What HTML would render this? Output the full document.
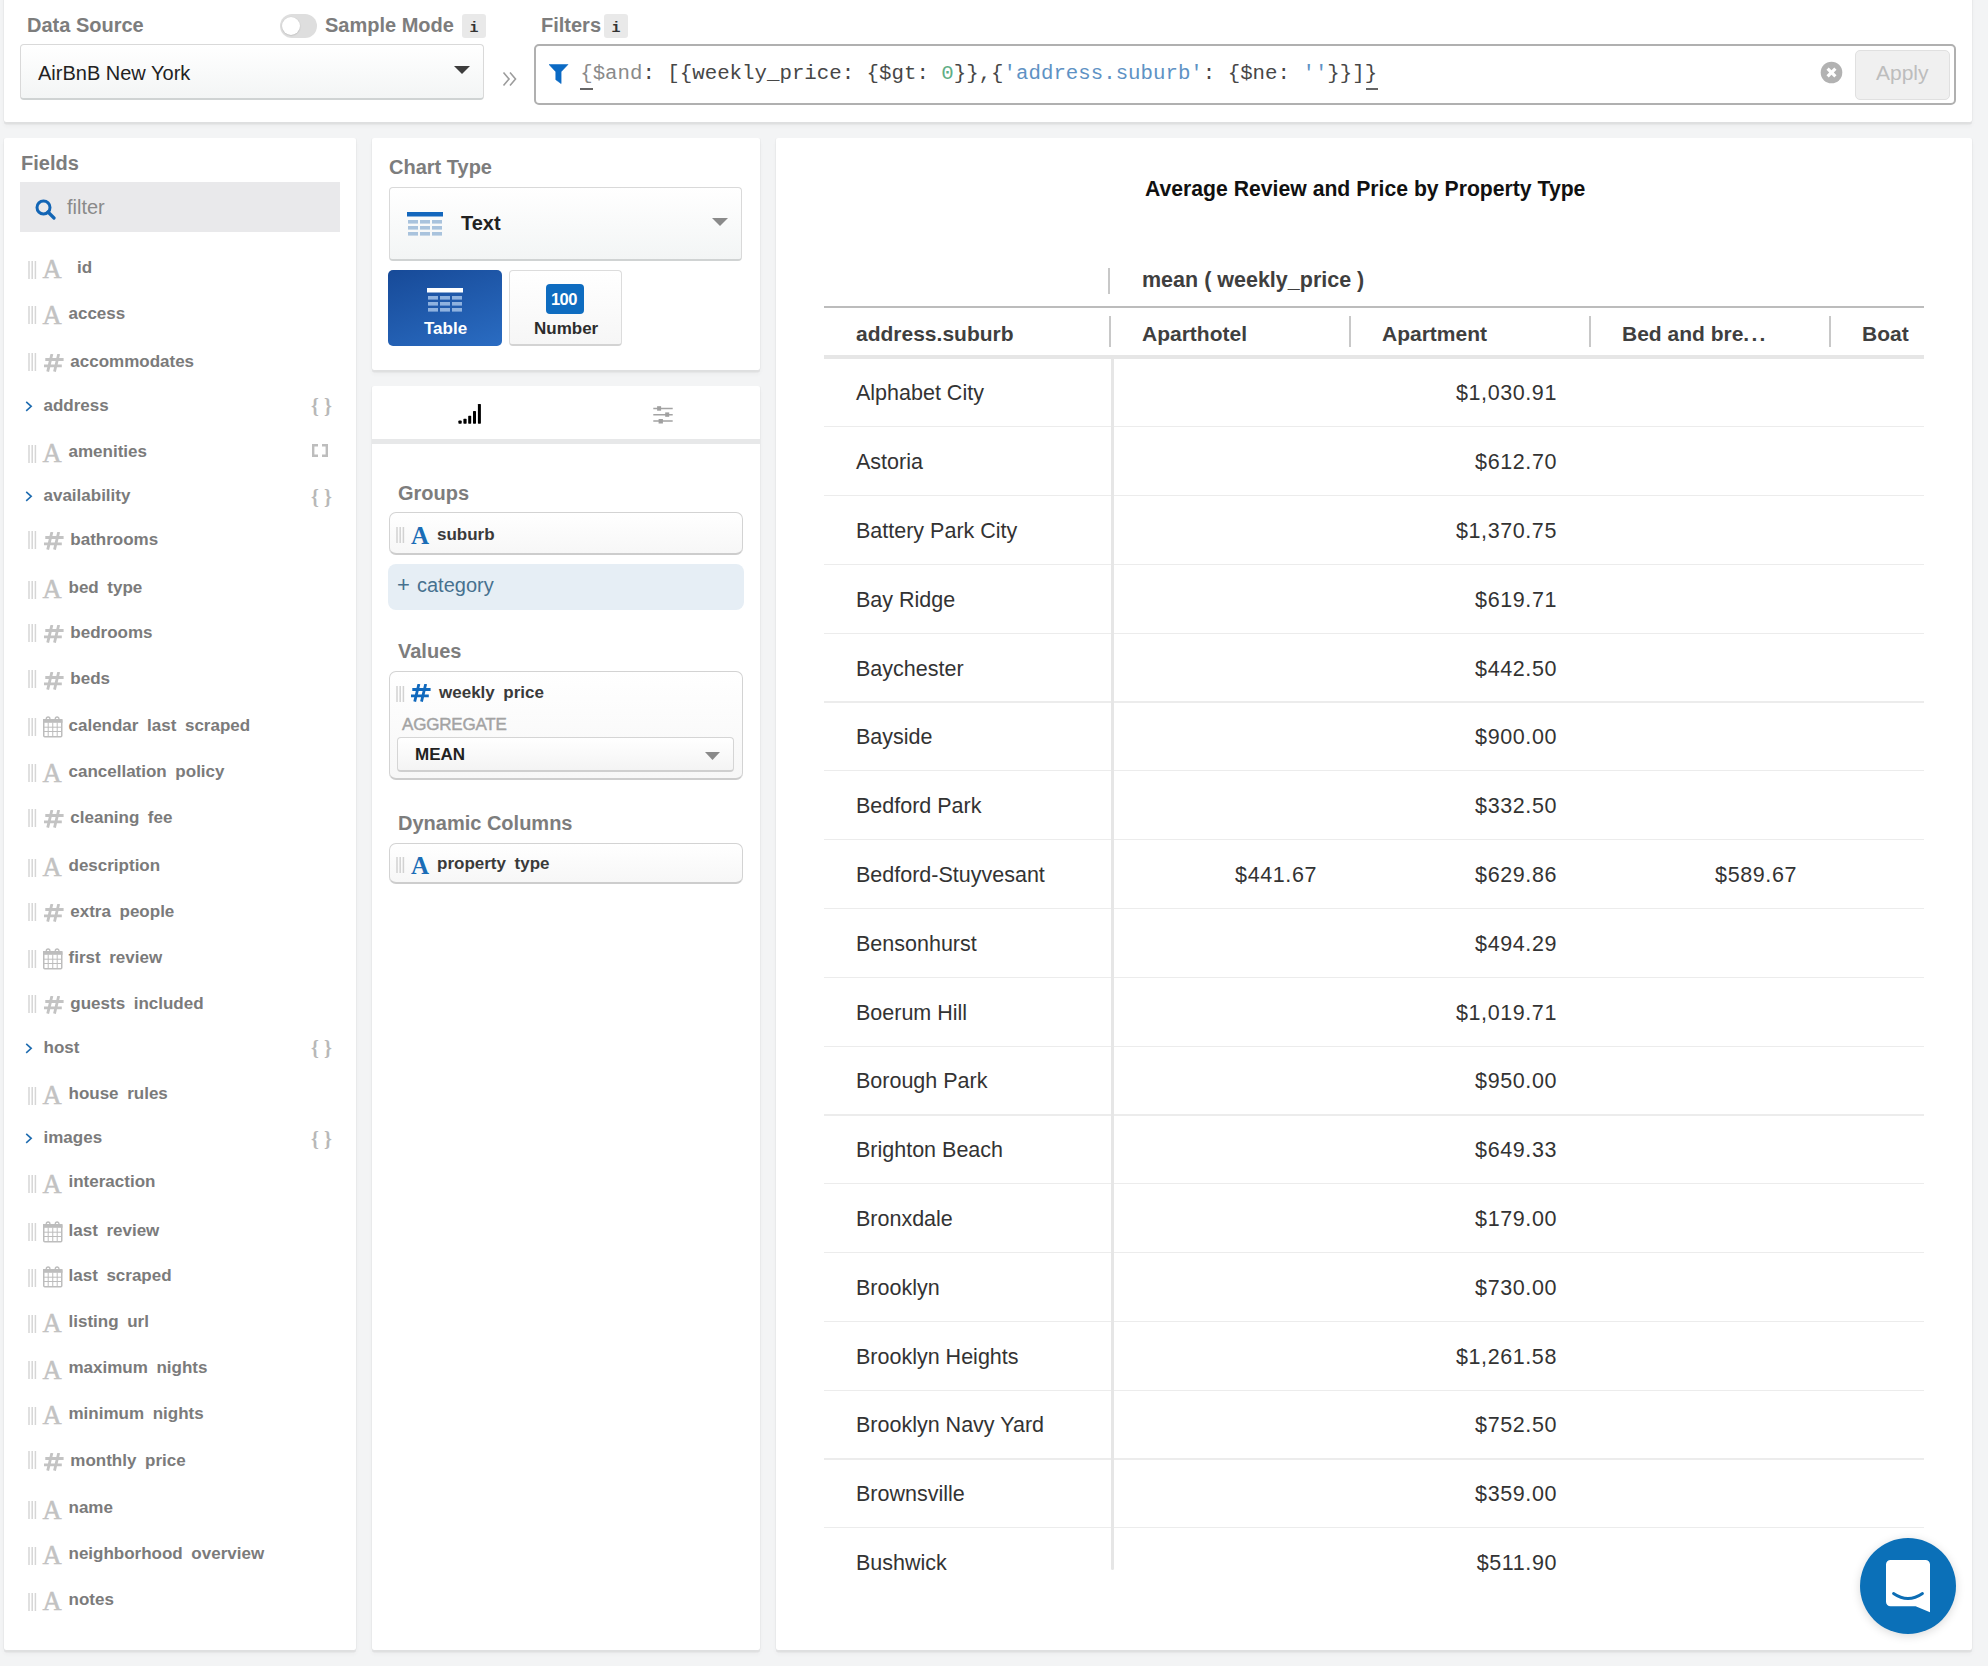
<!DOCTYPE html>
<html><head><meta charset="utf-8"><style>
html,body{margin:0;padding:0;}
body{width:1988px;height:1666px;overflow:hidden;position:relative;background:#f3f4f5;font-family:"Liberation Sans",sans-serif;}
.t{position:absolute;line-height:1;white-space:pre;}
</style></head><body>
<div style="position:absolute;left:4px;top:-6px;width:1968px;height:128px;background:#fff;border-radius:2px;box-shadow:0 2.5px 0 rgba(0,0,0,0.055),0 4px 5px rgba(0,0,0,0.035),1px 0 1px rgba(0,0,0,0.03),-1px 0 1px rgba(0,0,0,0.03);"></div>
<div style="position:absolute;left:4px;top:138px;width:352px;height:1512px;background:#fff;border-radius:2px;box-shadow:0 2.5px 0 rgba(0,0,0,0.055),0 4px 5px rgba(0,0,0,0.035),1px 0 1px rgba(0,0,0,0.03),-1px 0 1px rgba(0,0,0,0.03);"></div>
<div style="position:absolute;left:372px;top:138px;width:388px;height:232px;background:#fff;border-radius:2px;box-shadow:0 2.5px 0 rgba(0,0,0,0.055),0 4px 5px rgba(0,0,0,0.035),1px 0 1px rgba(0,0,0,0.03),-1px 0 1px rgba(0,0,0,0.03);"></div>
<div style="position:absolute;left:372px;top:386px;width:388px;height:1264px;background:#fff;border-radius:2px;box-shadow:0 2.5px 0 rgba(0,0,0,0.055),0 4px 5px rgba(0,0,0,0.035),1px 0 1px rgba(0,0,0,0.03),-1px 0 1px rgba(0,0,0,0.03);"></div>
<div style="position:absolute;left:776px;top:138px;width:1196px;height:1512px;background:#fff;border-radius:2px;box-shadow:0 2.5px 0 rgba(0,0,0,0.055),0 4px 5px rgba(0,0,0,0.035),1px 0 1px rgba(0,0,0,0.03),-1px 0 1px rgba(0,0,0,0.03);"></div>
<div class="t" style="left:27px;top:15.00px;font-size:20px;color:#7d7d7d;font-weight:bold;font-family:'Liberation Sans';">Data Source</div>
<div style="position:absolute;left:280px;top:14px;width:37px;height:24px;background:#dedede;border-radius:12px;"></div>
<div style="position:absolute;left:281.5px;top:17px;width:18.0px;height:18px;background:#fff;border-radius:50%;box-shadow:0 0.5px 1.5px rgba(0,0,0,0.2);"></div>
<div class="t" style="left:325px;top:15.00px;font-size:20px;color:#7d7d7d;font-weight:bold;font-family:'Liberation Sans';">Sample Mode</div>
<div style="position:absolute;left:462px;top:14px;width:24px;height:24px;background:#e9e9e9;border-radius:3px;"></div>
<div class="t" style="left:469.5px;top:20.60px;font-size:15px;color:#333;font-weight:bold;font-family:'Liberation Mono';">i</div>
<div style="position:absolute;left:20px;top:44px;width:464px;height:56px;box-sizing:border-box;border:1px solid #d9d9d9;border-bottom:2px solid #cfd3d3;border-radius:4px;background:linear-gradient(#fff,#f3f5f5);"></div>
<div class="t" style="left:38px;top:63.00px;font-size:20px;color:#222;font-weight:normal;font-family:'Liberation Sans';">AirBnB New York</div>
<svg style="position:absolute;left:454px;top:66px" width="16" height="8"><path d="M0 0H16L8 8Z" fill="#3d3d3d"/></svg>
<svg style="position:absolute;left:502px;top:71px" width="16" height="16"><path d="M1.5 1.5L7 8L1.5 14.5M8 1.5L13.5 8L8 14.5" fill="none" stroke="#9c9c9c" stroke-width="1.6"/></svg>
<div class="t" style="left:541px;top:15.00px;font-size:20px;color:#7d7d7d;font-weight:bold;font-family:'Liberation Sans';">Filters</div>
<div style="position:absolute;left:604px;top:14px;width:24px;height:24px;background:#e9e9e9;border-radius:3px;"></div>
<div class="t" style="left:611.5px;top:20.60px;font-size:15px;color:#333;font-weight:bold;font-family:'Liberation Mono';">i</div>
<div style="position:absolute;left:534px;top:44px;width:1422px;height:61px;box-sizing:border-box;border:2px solid #b0b0b0;border-radius:5px;background:#fff;"></div>
<svg style="position:absolute;left:549px;top:64px" width="20" height="21" viewBox="0 0 20 21"><path d="M0 0.4H19L12.1 7.8V19.6L6.8 15.7V7.8Z" fill="#0b6ac4" stroke="#0b6ac4" stroke-width="0.6" stroke-linejoin="round"/></svg>
<div class="t" style="left:580.2px;top:63.53px;font-size:20.75px;color:#333;font-weight:normal;font-family:'Liberation Mono';-webkit-text-stroke:0px;"><span style='color:#8a8a8a'>{$and</span><span style='color:#474747'>: [{weekly_price: {$gt: </span><span style='color:#5fae86'>0</span><span style='color:#474747'>}},{</span><span style='color:#5e92c4'>'address.suburb'</span><span style='color:#474747'>: {$ne: </span><span style='color:#5e92c4'>''</span><span style='color:#474747'>}}]}</span></div>
<div style="position:absolute;left:580.2px;top:88px;width:12.399999999999977px;height:2px;background:#666;"></div>
<div style="position:absolute;left:1365.6px;top:88px;width:12.400000000000091px;height:2px;background:#666;"></div>
<svg style="position:absolute;left:1820.3px;top:61.3px" width="23" height="23" viewBox="0 0 23 23"><circle cx="11.5" cy="11.5" r="10.8" fill="#b2b2b2"/><path d="M7.6 7.6L15.4 15.4M15.4 7.6L7.6 15.4" stroke="#fff" stroke-width="3.2"/></svg>
<div style="position:absolute;left:1854.5px;top:50.3px;width:95.09999999999991px;height:49.400000000000006px;box-sizing:border-box;border:1px solid #e0e0e0;border-radius:5px;background:#f0f0f0;"></div>
<div class="t" style="left:1876px;top:62.35px;font-size:21px;color:#bdbdbd;font-weight:normal;font-family:'Liberation Sans';">Apply</div>
<div class="t" style="left:21px;top:153.00px;font-size:20px;color:#7d7d7d;font-weight:bold;font-family:'Liberation Sans';">Fields</div>
<div style="position:absolute;left:20px;top:182px;width:320px;height:50px;background:#e9e9eb;"></div>
<svg style="position:absolute;left:35px;top:199px" width="21" height="21" viewBox="0 0 21 21"><circle cx="8.5" cy="8.5" r="6.5" fill="none" stroke="#1265b5" stroke-width="3"/><path d="M13 13L19 19" stroke="#1265b5" stroke-width="3.2" stroke-linecap="round"/></svg>
<div class="t" style="left:67px;top:197.00px;font-size:20px;color:#8a8a8a;font-weight:normal;font-family:'Liberation Sans';">filter</div>
<svg style="position:absolute;left:28px;top:260.8px" width="9" height="18"><path d="M1 0V18M4.2 0V18M7.4 0V18" stroke="#d6d6d6" stroke-width="1.5"/></svg>
<div class="t" style="left:42.5px;top:256.21px;font-size:26.5px;color:#c2c2c2;font-weight:normal;font-family:'Liberation Serif';-webkit-text-stroke:0.5px #c2c2c2;">A</div>
<div class="t" style="left:68.5px;top:259.15px;font-size:17px;color:#7b7b7b;font-weight:bold;font-family:'Liberation Sans';"><span style="display:inline-block;width:8.6px"></span>id</div>
<svg style="position:absolute;left:28px;top:306.3px" width="9" height="18"><path d="M1 0V18M4.2 0V18M7.4 0V18" stroke="#d6d6d6" stroke-width="1.5"/></svg>
<div class="t" style="left:42.5px;top:301.71px;font-size:26.5px;color:#c2c2c2;font-weight:normal;font-family:'Liberation Serif';-webkit-text-stroke:0.5px #c2c2c2;">A</div>
<div class="t" style="left:68.5px;top:304.65px;font-size:17px;color:#7b7b7b;font-weight:bold;font-family:'Liberation Sans';">access</div>
<svg style="position:absolute;left:28px;top:352.5px" width="9" height="18"><path d="M1 0V18M4.2 0V18M7.4 0V18" stroke="#d6d6d6" stroke-width="1.5"/></svg>
<svg style="position:absolute;left:43.5px;top:353.8px" width="20" height="18" viewBox="0 0 20 18"><path d="M1.3 5.5H19.6M0 11.8H17.8M7.9 0L3.7 17.6M14.7 0L10.5 17.6" stroke="#c3c3c3" stroke-width="2.8"/></svg>
<div class="t" style="left:70.3px;top:352.75px;font-size:17px;color:#7b7b7b;font-weight:bold;font-family:'Liberation Sans';">accommodates</div>
<svg style="position:absolute;left:25px;top:400.9px" width="8" height="11"><path d="M1.2 0.8L6.2 5.3L1.2 9.8" fill="none" stroke="#1f6cb0" stroke-width="1.6"/></svg>
<div class="t" style="left:43.5px;top:397.05px;font-size:17px;color:#7b7b7b;font-weight:bold;font-family:'Liberation Sans';">address</div>
<div class="t" style="left:311px;top:396.40px;font-size:20px;color:#b8b8b8;font-weight:bold;font-family:'Liberation Serif';">{ }</div>
<svg style="position:absolute;left:28px;top:444.5px" width="9" height="18"><path d="M1 0V18M4.2 0V18M7.4 0V18" stroke="#d6d6d6" stroke-width="1.5"/></svg>
<div class="t" style="left:42.5px;top:439.91px;font-size:26.5px;color:#c2c2c2;font-weight:normal;font-family:'Liberation Serif';-webkit-text-stroke:0.5px #c2c2c2;">A</div>
<div class="t" style="left:68.5px;top:442.85px;font-size:17px;color:#7b7b7b;font-weight:bold;font-family:'Liberation Sans';">amenities</div>
<svg style="position:absolute;left:312px;top:444.0px" width="16" height="13"><path d="M6 1.2H1.2V11.8H6M10 1.2H14.8V11.8H10" fill="none" stroke="#bdbdbd" stroke-width="2.4"/></svg>
<svg style="position:absolute;left:25px;top:491.0px" width="8" height="11"><path d="M1.2 0.8L6.2 5.3L1.2 9.8" fill="none" stroke="#1f6cb0" stroke-width="1.6"/></svg>
<div class="t" style="left:43.5px;top:487.15px;font-size:17px;color:#7b7b7b;font-weight:bold;font-family:'Liberation Sans';">availability</div>
<div class="t" style="left:311px;top:486.50px;font-size:20px;color:#b8b8b8;font-weight:bold;font-family:'Liberation Serif';">{ }</div>
<svg style="position:absolute;left:28px;top:530.6px" width="9" height="18"><path d="M1 0V18M4.2 0V18M7.4 0V18" stroke="#d6d6d6" stroke-width="1.5"/></svg>
<svg style="position:absolute;left:43.5px;top:531.9px" width="20" height="18" viewBox="0 0 20 18"><path d="M1.3 5.5H19.6M0 11.8H17.8M7.9 0L3.7 17.6M14.7 0L10.5 17.6" stroke="#c3c3c3" stroke-width="2.8"/></svg>
<div class="t" style="left:70.3px;top:530.85px;font-size:17px;color:#7b7b7b;font-weight:bold;font-family:'Liberation Sans';">bathrooms</div>
<svg style="position:absolute;left:28px;top:580.5px" width="9" height="18"><path d="M1 0V18M4.2 0V18M7.4 0V18" stroke="#d6d6d6" stroke-width="1.5"/></svg>
<div class="t" style="left:42.5px;top:575.90px;font-size:26.5px;color:#c2c2c2;font-weight:normal;font-family:'Liberation Serif';-webkit-text-stroke:0.5px #c2c2c2;">A</div>
<div class="t" style="left:68.5px;top:578.85px;font-size:17px;color:#7b7b7b;font-weight:bold;font-family:'Liberation Sans';">bed<span style="display:inline-block;width:8.6px"></span>type</div>
<svg style="position:absolute;left:28px;top:624.0px" width="9" height="18"><path d="M1 0V18M4.2 0V18M7.4 0V18" stroke="#d6d6d6" stroke-width="1.5"/></svg>
<svg style="position:absolute;left:43.5px;top:625.3px" width="20" height="18" viewBox="0 0 20 18"><path d="M1.3 5.5H19.6M0 11.8H17.8M7.9 0L3.7 17.6M14.7 0L10.5 17.6" stroke="#c3c3c3" stroke-width="2.8"/></svg>
<div class="t" style="left:70.3px;top:624.25px;font-size:17px;color:#7b7b7b;font-weight:bold;font-family:'Liberation Sans';">bedrooms</div>
<svg style="position:absolute;left:28px;top:670.2px" width="9" height="18"><path d="M1 0V18M4.2 0V18M7.4 0V18" stroke="#d6d6d6" stroke-width="1.5"/></svg>
<svg style="position:absolute;left:43.5px;top:671.5px" width="20" height="18" viewBox="0 0 20 18"><path d="M1.3 5.5H19.6M0 11.8H17.8M7.9 0L3.7 17.6M14.7 0L10.5 17.6" stroke="#c3c3c3" stroke-width="2.8"/></svg>
<div class="t" style="left:70.3px;top:670.45px;font-size:17px;color:#7b7b7b;font-weight:bold;font-family:'Liberation Sans';">beds</div>
<svg style="position:absolute;left:28px;top:718.2px" width="9" height="18"><path d="M1 0V18M4.2 0V18M7.4 0V18" stroke="#d6d6d6" stroke-width="1.5"/></svg>
<svg style="position:absolute;left:43px;top:715.7px" width="20" height="22" viewBox="0 0 20 22"><rect x="0.75" y="3.75" width="18" height="17" rx="1" fill="none" stroke="#bdbdbd" stroke-width="1.5"/><rect x="0" y="3" width="19.5" height="3.8" fill="#bdbdbd"/><path d="M0.75 11.2H18.75M0.75 15.5H18.75M5.2 6.5V20.75M9.75 6.5V20.75M14.2 6.5V20.75" stroke="#bdbdbd" stroke-width="1"/><path d="M3.3 4.5V2.8A1.8 1.8 0 0 1 6.9 2.8V4.5M12.3 4.5V2.8A1.8 1.8 0 0 1 15.9 2.8V4.5" fill="none" stroke="#bdbdbd" stroke-width="1.4"/></svg>
<div class="t" style="left:68.5px;top:716.75px;font-size:17px;color:#7b7b7b;font-weight:bold;font-family:'Liberation Sans';">calendar<span style="display:inline-block;width:8.6px"></span>last<span style="display:inline-block;width:8.6px"></span>scraped</div>
<svg style="position:absolute;left:28px;top:764.3px" width="9" height="18"><path d="M1 0V18M4.2 0V18M7.4 0V18" stroke="#d6d6d6" stroke-width="1.5"/></svg>
<div class="t" style="left:42.5px;top:759.71px;font-size:26.5px;color:#c2c2c2;font-weight:normal;font-family:'Liberation Serif';-webkit-text-stroke:0.5px #c2c2c2;">A</div>
<div class="t" style="left:68.5px;top:762.65px;font-size:17px;color:#7b7b7b;font-weight:bold;font-family:'Liberation Sans';">cancellation<span style="display:inline-block;width:8.6px"></span>policy</div>
<svg style="position:absolute;left:28px;top:809.0px" width="9" height="18"><path d="M1 0V18M4.2 0V18M7.4 0V18" stroke="#d6d6d6" stroke-width="1.5"/></svg>
<svg style="position:absolute;left:43.5px;top:810.3px" width="20" height="18" viewBox="0 0 20 18"><path d="M1.3 5.5H19.6M0 11.8H17.8M7.9 0L3.7 17.6M14.7 0L10.5 17.6" stroke="#c3c3c3" stroke-width="2.8"/></svg>
<div class="t" style="left:70.3px;top:809.25px;font-size:17px;color:#7b7b7b;font-weight:bold;font-family:'Liberation Sans';">cleaning<span style="display:inline-block;width:8.6px"></span>fee</div>
<svg style="position:absolute;left:28px;top:858.5px" width="9" height="18"><path d="M1 0V18M4.2 0V18M7.4 0V18" stroke="#d6d6d6" stroke-width="1.5"/></svg>
<div class="t" style="left:42.5px;top:853.90px;font-size:26.5px;color:#c2c2c2;font-weight:normal;font-family:'Liberation Serif';-webkit-text-stroke:0.5px #c2c2c2;">A</div>
<div class="t" style="left:68.5px;top:856.85px;font-size:17px;color:#7b7b7b;font-weight:bold;font-family:'Liberation Sans';">description</div>
<svg style="position:absolute;left:28px;top:902.7px" width="9" height="18"><path d="M1 0V18M4.2 0V18M7.4 0V18" stroke="#d6d6d6" stroke-width="1.5"/></svg>
<svg style="position:absolute;left:43.5px;top:904.0px" width="20" height="18" viewBox="0 0 20 18"><path d="M1.3 5.5H19.6M0 11.8H17.8M7.9 0L3.7 17.6M14.7 0L10.5 17.6" stroke="#c3c3c3" stroke-width="2.8"/></svg>
<div class="t" style="left:70.3px;top:902.95px;font-size:17px;color:#7b7b7b;font-weight:bold;font-family:'Liberation Sans';">extra<span style="display:inline-block;width:8.6px"></span>people</div>
<svg style="position:absolute;left:28px;top:950.3px" width="9" height="18"><path d="M1 0V18M4.2 0V18M7.4 0V18" stroke="#d6d6d6" stroke-width="1.5"/></svg>
<svg style="position:absolute;left:43px;top:947.8px" width="20" height="22" viewBox="0 0 20 22"><rect x="0.75" y="3.75" width="18" height="17" rx="1" fill="none" stroke="#bdbdbd" stroke-width="1.5"/><rect x="0" y="3" width="19.5" height="3.8" fill="#bdbdbd"/><path d="M0.75 11.2H18.75M0.75 15.5H18.75M5.2 6.5V20.75M9.75 6.5V20.75M14.2 6.5V20.75" stroke="#bdbdbd" stroke-width="1"/><path d="M3.3 4.5V2.8A1.8 1.8 0 0 1 6.9 2.8V4.5M12.3 4.5V2.8A1.8 1.8 0 0 1 15.9 2.8V4.5" fill="none" stroke="#bdbdbd" stroke-width="1.4"/></svg>
<div class="t" style="left:68.5px;top:948.85px;font-size:17px;color:#7b7b7b;font-weight:bold;font-family:'Liberation Sans';">first<span style="display:inline-block;width:8.6px"></span>review</div>
<svg style="position:absolute;left:28px;top:994.9px" width="9" height="18"><path d="M1 0V18M4.2 0V18M7.4 0V18" stroke="#d6d6d6" stroke-width="1.5"/></svg>
<svg style="position:absolute;left:43.5px;top:996.2px" width="20" height="18" viewBox="0 0 20 18"><path d="M1.3 5.5H19.6M0 11.8H17.8M7.9 0L3.7 17.6M14.7 0L10.5 17.6" stroke="#c3c3c3" stroke-width="2.8"/></svg>
<div class="t" style="left:70.3px;top:995.15px;font-size:17px;color:#7b7b7b;font-weight:bold;font-family:'Liberation Sans';">guests<span style="display:inline-block;width:8.6px"></span>included</div>
<svg style="position:absolute;left:25px;top:1042.8px" width="8" height="11"><path d="M1.2 0.8L6.2 5.3L1.2 9.8" fill="none" stroke="#1f6cb0" stroke-width="1.6"/></svg>
<div class="t" style="left:43.5px;top:1038.95px;font-size:17px;color:#7b7b7b;font-weight:bold;font-family:'Liberation Sans';">host</div>
<div class="t" style="left:311px;top:1038.30px;font-size:20px;color:#b8b8b8;font-weight:bold;font-family:'Liberation Serif';">{ }</div>
<svg style="position:absolute;left:28px;top:1086.8px" width="9" height="18"><path d="M1 0V18M4.2 0V18M7.4 0V18" stroke="#d6d6d6" stroke-width="1.5"/></svg>
<div class="t" style="left:42.5px;top:1082.20px;font-size:26.5px;color:#c2c2c2;font-weight:normal;font-family:'Liberation Serif';-webkit-text-stroke:0.5px #c2c2c2;">A</div>
<div class="t" style="left:68.5px;top:1085.15px;font-size:17px;color:#7b7b7b;font-weight:bold;font-family:'Liberation Sans';">house<span style="display:inline-block;width:8.6px"></span>rules</div>
<svg style="position:absolute;left:25px;top:1133.1px" width="8" height="11"><path d="M1.2 0.8L6.2 5.3L1.2 9.8" fill="none" stroke="#1f6cb0" stroke-width="1.6"/></svg>
<div class="t" style="left:43.5px;top:1129.25px;font-size:17px;color:#7b7b7b;font-weight:bold;font-family:'Liberation Sans';">images</div>
<div class="t" style="left:311px;top:1128.60px;font-size:20px;color:#b8b8b8;font-weight:bold;font-family:'Liberation Serif';">{ }</div>
<svg style="position:absolute;left:28px;top:1175.1px" width="9" height="18"><path d="M1 0V18M4.2 0V18M7.4 0V18" stroke="#d6d6d6" stroke-width="1.5"/></svg>
<div class="t" style="left:42.5px;top:1170.51px;font-size:26.5px;color:#c2c2c2;font-weight:normal;font-family:'Liberation Serif';-webkit-text-stroke:0.5px #c2c2c2;">A</div>
<div class="t" style="left:68.5px;top:1173.45px;font-size:17px;color:#7b7b7b;font-weight:bold;font-family:'Liberation Sans';">interaction</div>
<svg style="position:absolute;left:28px;top:1223.0px" width="9" height="18"><path d="M1 0V18M4.2 0V18M7.4 0V18" stroke="#d6d6d6" stroke-width="1.5"/></svg>
<svg style="position:absolute;left:43px;top:1220.5px" width="20" height="22" viewBox="0 0 20 22"><rect x="0.75" y="3.75" width="18" height="17" rx="1" fill="none" stroke="#bdbdbd" stroke-width="1.5"/><rect x="0" y="3" width="19.5" height="3.8" fill="#bdbdbd"/><path d="M0.75 11.2H18.75M0.75 15.5H18.75M5.2 6.5V20.75M9.75 6.5V20.75M14.2 6.5V20.75" stroke="#bdbdbd" stroke-width="1"/><path d="M3.3 4.5V2.8A1.8 1.8 0 0 1 6.9 2.8V4.5M12.3 4.5V2.8A1.8 1.8 0 0 1 15.9 2.8V4.5" fill="none" stroke="#bdbdbd" stroke-width="1.4"/></svg>
<div class="t" style="left:68.5px;top:1221.55px;font-size:17px;color:#7b7b7b;font-weight:bold;font-family:'Liberation Sans';">last<span style="display:inline-block;width:8.6px"></span>review</div>
<svg style="position:absolute;left:28px;top:1268.9px" width="9" height="18"><path d="M1 0V18M4.2 0V18M7.4 0V18" stroke="#d6d6d6" stroke-width="1.5"/></svg>
<svg style="position:absolute;left:43px;top:1266.4px" width="20" height="22" viewBox="0 0 20 22"><rect x="0.75" y="3.75" width="18" height="17" rx="1" fill="none" stroke="#bdbdbd" stroke-width="1.5"/><rect x="0" y="3" width="19.5" height="3.8" fill="#bdbdbd"/><path d="M0.75 11.2H18.75M0.75 15.5H18.75M5.2 6.5V20.75M9.75 6.5V20.75M14.2 6.5V20.75" stroke="#bdbdbd" stroke-width="1"/><path d="M3.3 4.5V2.8A1.8 1.8 0 0 1 6.9 2.8V4.5M12.3 4.5V2.8A1.8 1.8 0 0 1 15.9 2.8V4.5" fill="none" stroke="#bdbdbd" stroke-width="1.4"/></svg>
<div class="t" style="left:68.5px;top:1267.45px;font-size:17px;color:#7b7b7b;font-weight:bold;font-family:'Liberation Sans';">last<span style="display:inline-block;width:8.6px"></span>scraped</div>
<svg style="position:absolute;left:28px;top:1314.9px" width="9" height="18"><path d="M1 0V18M4.2 0V18M7.4 0V18" stroke="#d6d6d6" stroke-width="1.5"/></svg>
<div class="t" style="left:42.5px;top:1310.31px;font-size:26.5px;color:#c2c2c2;font-weight:normal;font-family:'Liberation Serif';-webkit-text-stroke:0.5px #c2c2c2;">A</div>
<div class="t" style="left:68.5px;top:1313.25px;font-size:17px;color:#7b7b7b;font-weight:bold;font-family:'Liberation Sans';">listing<span style="display:inline-block;width:8.6px"></span>url</div>
<svg style="position:absolute;left:28px;top:1361.1px" width="9" height="18"><path d="M1 0V18M4.2 0V18M7.4 0V18" stroke="#d6d6d6" stroke-width="1.5"/></svg>
<div class="t" style="left:42.5px;top:1356.51px;font-size:26.5px;color:#c2c2c2;font-weight:normal;font-family:'Liberation Serif';-webkit-text-stroke:0.5px #c2c2c2;">A</div>
<div class="t" style="left:68.5px;top:1359.45px;font-size:17px;color:#7b7b7b;font-weight:bold;font-family:'Liberation Sans';">maximum<span style="display:inline-block;width:8.6px"></span>nights</div>
<svg style="position:absolute;left:28px;top:1407.0px" width="9" height="18"><path d="M1 0V18M4.2 0V18M7.4 0V18" stroke="#d6d6d6" stroke-width="1.5"/></svg>
<div class="t" style="left:42.5px;top:1402.40px;font-size:26.5px;color:#c2c2c2;font-weight:normal;font-family:'Liberation Serif';-webkit-text-stroke:0.5px #c2c2c2;">A</div>
<div class="t" style="left:68.5px;top:1405.35px;font-size:17px;color:#7b7b7b;font-weight:bold;font-family:'Liberation Sans';">minimum<span style="display:inline-block;width:8.6px"></span>nights</div>
<svg style="position:absolute;left:28px;top:1451.4px" width="9" height="18"><path d="M1 0V18M4.2 0V18M7.4 0V18" stroke="#d6d6d6" stroke-width="1.5"/></svg>
<svg style="position:absolute;left:43.5px;top:1452.7px" width="20" height="18" viewBox="0 0 20 18"><path d="M1.3 5.5H19.6M0 11.8H17.8M7.9 0L3.7 17.6M14.7 0L10.5 17.6" stroke="#c3c3c3" stroke-width="2.8"/></svg>
<div class="t" style="left:70.3px;top:1451.65px;font-size:17px;color:#7b7b7b;font-weight:bold;font-family:'Liberation Sans';">monthly<span style="display:inline-block;width:8.6px"></span>price</div>
<svg style="position:absolute;left:28px;top:1501.1px" width="9" height="18"><path d="M1 0V18M4.2 0V18M7.4 0V18" stroke="#d6d6d6" stroke-width="1.5"/></svg>
<div class="t" style="left:42.5px;top:1496.51px;font-size:26.5px;color:#c2c2c2;font-weight:normal;font-family:'Liberation Serif';-webkit-text-stroke:0.5px #c2c2c2;">A</div>
<div class="t" style="left:68.5px;top:1499.45px;font-size:17px;color:#7b7b7b;font-weight:bold;font-family:'Liberation Sans';">name</div>
<svg style="position:absolute;left:28px;top:1546.8px" width="9" height="18"><path d="M1 0V18M4.2 0V18M7.4 0V18" stroke="#d6d6d6" stroke-width="1.5"/></svg>
<div class="t" style="left:42.5px;top:1542.20px;font-size:26.5px;color:#c2c2c2;font-weight:normal;font-family:'Liberation Serif';-webkit-text-stroke:0.5px #c2c2c2;">A</div>
<div class="t" style="left:68.5px;top:1545.15px;font-size:17px;color:#7b7b7b;font-weight:bold;font-family:'Liberation Sans';">neighborhood<span style="display:inline-block;width:8.6px"></span>overview</div>
<svg style="position:absolute;left:28px;top:1592.7px" width="9" height="18"><path d="M1 0V18M4.2 0V18M7.4 0V18" stroke="#d6d6d6" stroke-width="1.5"/></svg>
<div class="t" style="left:42.5px;top:1588.11px;font-size:26.5px;color:#c2c2c2;font-weight:normal;font-family:'Liberation Serif';-webkit-text-stroke:0.5px #c2c2c2;">A</div>
<div class="t" style="left:68.5px;top:1591.05px;font-size:17px;color:#7b7b7b;font-weight:bold;font-family:'Liberation Sans';">notes</div>
<div class="t" style="left:389px;top:157.00px;font-size:20px;color:#7d7d7d;font-weight:bold;font-family:'Liberation Sans';">Chart Type</div>
<div style="position:absolute;left:389px;top:187px;width:353px;height:74px;box-sizing:border-box;border:1px solid #d9d9d9;border-bottom:2px solid #d0d3d3;border-radius:4px;background:linear-gradient(#fff,#f3f5f5);"></div>
<svg style="position:absolute;left:407px;top:212px" width="36" height="24" viewBox="0 0 36 24"><rect x="0" y="0" width="36" height="4.5" fill="#1467bd"/><rect x="1" y="8" width="10" height="3.6" fill="#a9c3dd"/><rect x="13" y="8" width="10" height="3.6" fill="#a9c3dd"/><rect x="25" y="8" width="10" height="3.6" fill="#a9c3dd"/><rect x="1" y="14" width="10" height="3.6" fill="#a9c3dd"/><rect x="13" y="14" width="10" height="3.6" fill="#a9c3dd"/><rect x="25" y="14" width="10" height="3.6" fill="#a9c3dd"/><rect x="1" y="20" width="10" height="3.6" fill="#a9c3dd"/><rect x="13" y="20" width="10" height="3.6" fill="#a9c3dd"/><rect x="25" y="20" width="10" height="3.6" fill="#a9c3dd"/></svg>
<div class="t" style="left:461px;top:213.00px;font-size:20px;color:#222;font-weight:bold;font-family:'Liberation Sans';">Text</div>
<svg style="position:absolute;left:712px;top:218px" width="16" height="8"><path d="M0 0H16L8 8Z" fill="#8a8a8a"/></svg>
<div style="position:absolute;left:388px;top:270px;width:114px;height:76px;border-radius:5px;background:linear-gradient(160deg,#174a98,#2a6cc2);"></div>
<svg style="position:absolute;left:427px;top:288px" width="36" height="24" viewBox="0 0 36 24"><rect x="0" y="0" width="36" height="4.5" fill="#ffffff"/><rect x="1" y="8" width="10" height="3.6" fill="#8fb2df"/><rect x="13" y="8" width="10" height="3.6" fill="#8fb2df"/><rect x="25" y="8" width="10" height="3.6" fill="#8fb2df"/><rect x="1" y="14" width="10" height="3.6" fill="#8fb2df"/><rect x="13" y="14" width="10" height="3.6" fill="#8fb2df"/><rect x="25" y="14" width="10" height="3.6" fill="#8fb2df"/><rect x="1" y="20" width="10" height="3.6" fill="#8fb2df"/><rect x="13" y="20" width="10" height="3.6" fill="#8fb2df"/><rect x="25" y="20" width="10" height="3.6" fill="#8fb2df"/></svg>
<div class="t" style="left:424px;top:319.55px;font-size:17px;color:#fff;font-weight:bold;font-family:'Liberation Sans';">Table</div>
<div style="position:absolute;left:509px;top:270px;width:113px;height:76px;box-sizing:border-box;border:1px solid #dcdcdc;border-bottom:2px solid #d3d3d3;border-radius:4px;background:linear-gradient(#fff,#f6f6f6);"></div>
<div style="position:absolute;left:546px;top:284px;width:38px;height:30px;background:#0e6cc0;border-radius:4px;"></div>
<div class="t" style="left:551px;top:290.98px;font-size:16.5px;color:#fff;font-weight:bold;font-family:'Liberation Sans';letter-spacing:-0.6px;">100</div>
<div class="t" style="left:534px;top:319.55px;font-size:17px;color:#2c2c2c;font-weight:bold;font-family:'Liberation Sans';">Number</div>
<svg style="position:absolute;left:458px;top:404px" width="24" height="20" viewBox="0 0 24 20"><rect x="0.4" y="16.4" width="3.3" height="3.3" rx="0.8" fill="#000"/><rect x="5.4" y="14.8" width="3.2" height="4.9" rx="0.6" fill="#000"/><rect x="10.2" y="11.8" width="3" height="7.9" rx="0.6" fill="#000"/><rect x="15" y="7" width="3" height="12.7" rx="0.6" fill="#000"/><rect x="19.9" y="0" width="3" height="19.7" rx="0.6" fill="#000"/></svg>
<svg style="position:absolute;left:653px;top:405px" width="21" height="20" viewBox="0 0 21 20"><path d="M0.3 3.5H19.7M0.3 9.7H19.7M0.3 16H19.7" stroke="#a3a3a3" stroke-width="1.6"/><rect x="4.1" y="1.2" width="4" height="4.5" fill="#a0a0a0"/><rect x="12.2" y="7.4" width="4" height="4.4" fill="#a0a0a0"/><rect x="5.6" y="14" width="4.3" height="4.5" fill="#a0a0a0"/></svg>
<div style="position:absolute;left:372px;top:439px;width:388px;height:5px;background:#e7e8e9;"></div>
<div class="t" style="left:398px;top:483.00px;font-size:20px;color:#7d7d7d;font-weight:bold;font-family:'Liberation Sans';">Groups</div>
<div style="position:absolute;left:389px;top:512px;width:354px;height:43px;box-sizing:border-box;border:1px solid #d3d3d3;border-bottom:2px solid #cdcdcd;border-radius:7px;background:linear-gradient(#fff,#f7f7f7);"></div>
<svg style="position:absolute;left:396px;top:527.0px" width="9" height="16"><path d="M1 0V16M4.2 0V16M7.4 0V16" stroke="#d2d2d2" stroke-width="1.5"/></svg>
<div class="t" style="left:411px;top:523.25px;font-size:25px;color:#1a6db6;font-weight:bold;font-family:'Liberation Serif';">A</div>
<div class="t" style="left:437px;top:525.55px;font-size:17px;color:#3a3a3a;font-weight:bold;font-family:'Liberation Sans';">suburb</div>
<div style="position:absolute;left:388px;top:564px;width:356px;height:46px;background:#e6eef5;border-radius:8px;"></div>
<div class="t" style="left:397px;top:574.30px;font-size:22px;color:#47718f;font-weight:normal;font-family:'Liberation Sans';">+</div>
<div class="t" style="left:417px;top:575.00px;font-size:20px;color:#47718f;font-weight:normal;font-family:'Liberation Sans';">category</div>
<div class="t" style="left:398px;top:641.00px;font-size:20px;color:#7d7d7d;font-weight:bold;font-family:'Liberation Sans';">Values</div>
<div style="position:absolute;left:389px;top:671px;width:354px;height:109px;box-sizing:border-box;border:1px solid #d3d3d3;border-bottom:2px solid #cdcdcd;border-radius:7px;background:linear-gradient(#fff,#f7f7f7);"></div>
<svg style="position:absolute;left:396px;top:686.0px" width="9" height="16"><path d="M1 0V16M4.2 0V16M7.4 0V16" stroke="#d2d2d2" stroke-width="1.5"/></svg>
<svg style="position:absolute;left:411.4px;top:684.0px" width="20" height="18" viewBox="0 0 20 18"><path d="M1.3 5.5H19.6M0 11.8H17.8M7.9 0L3.7 17.6M14.7 0L10.5 17.6" stroke="#1069bd" stroke-width="2.8"/></svg>
<div class="t" style="left:439px;top:683.55px;font-size:17px;color:#3a3a3a;font-weight:bold;font-family:'Liberation Sans';">weekly<span style="display:inline-block;width:8.6px"></span>price</div>
<div class="t" style="left:402px;top:715.55px;font-size:17px;color:#a3a3a3;font-weight:normal;font-family:'Liberation Sans';letter-spacing:-0.2px;-webkit-text-stroke:0.45px #a3a3a3;">AGGREGATE</div>
<div style="position:absolute;left:397px;top:737px;width:337px;height:35px;box-sizing:border-box;border:1px solid #d5d5d5;border-bottom:2px solid #cfcfcf;border-radius:4px;background:linear-gradient(#fff,#f4f4f4);"></div>
<div class="t" style="left:415px;top:745.55px;font-size:17px;color:#222;font-weight:bold;font-family:'Liberation Sans';">MEAN</div>
<svg style="position:absolute;left:705px;top:752px" width="15" height="8"><path d="M0 0H15L7.5 8Z" fill="#8a8a8a"/></svg>
<div class="t" style="left:398px;top:813.00px;font-size:20px;color:#7d7d7d;font-weight:bold;font-family:'Liberation Sans';">Dynamic Columns</div>
<div style="position:absolute;left:389px;top:843px;width:354px;height:41px;box-sizing:border-box;border:1px solid #d3d3d3;border-bottom:2px solid #cdcdcd;border-radius:7px;background:linear-gradient(#fff,#f7f7f7);"></div>
<svg style="position:absolute;left:396px;top:857.0px" width="9" height="16"><path d="M1 0V16M4.2 0V16M7.4 0V16" stroke="#d2d2d2" stroke-width="1.5"/></svg>
<div class="t" style="left:411px;top:853.25px;font-size:25px;color:#1a6db6;font-weight:bold;font-family:'Liberation Serif';">A</div>
<div class="t" style="left:437px;top:855.05px;font-size:17px;color:#3a3a3a;font-weight:bold;font-family:'Liberation Sans';">property<span style="display:inline-block;width:8.6px"></span>type</div>
<div class="t" style="left:1145px;top:177.98px;font-size:21.2px;color:#111;font-weight:bold;font-family:'Liberation Sans';">Average Review and Price by Property Type</div>
<div style="position:absolute;left:1108px;top:268px;width:2px;height:26px;background:#c8c8c8;"></div>
<div class="t" style="left:1142px;top:269.73px;font-size:21.5px;color:#3f3f3f;font-weight:bold;font-family:'Liberation Sans';">mean ( weekly_price )</div>
<div style="position:absolute;left:824px;top:306px;width:1100px;height:2px;background:#bcbcbc;"></div>
<div class="t" style="left:856px;top:322.65px;font-size:21px;color:#3f3f3f;font-weight:bold;font-family:'Liberation Sans';">address.suburb</div>
<div style="position:absolute;left:1109px;top:316px;width:2px;height:31px;background:#c8c8c8;"></div>
<div class="t" style="left:1142px;top:322.65px;font-size:21px;color:#3f3f3f;font-weight:bold;font-family:'Liberation Sans';">Aparthotel</div>
<div style="position:absolute;left:1349px;top:316px;width:2px;height:31px;background:#c8c8c8;"></div>
<div class="t" style="left:1382px;top:322.65px;font-size:21px;color:#3f3f3f;font-weight:bold;font-family:'Liberation Sans';">Apartment</div>
<div style="position:absolute;left:1589px;top:316px;width:2px;height:31px;background:#c8c8c8;"></div>
<div class="t" style="left:1622px;top:322.65px;font-size:21px;color:#3f3f3f;font-weight:bold;font-family:'Liberation Sans';">Bed and bre<span style="letter-spacing:2.2px">...</span></div>
<div style="position:absolute;left:1829px;top:316px;width:2px;height:31px;background:#c8c8c8;"></div>
<div class="t" style="left:1862px;top:322.65px;font-size:21px;color:#3f3f3f;font-weight:bold;font-family:'Liberation Sans';">Boat</div>
<div style="position:absolute;left:824px;top:355px;width:1100px;height:4px;background:#e6e6e6;"></div>
<div style="position:absolute;left:776px;top:359px;width:1196px;height:1213px;overflow:hidden">
<div class="t" style="left:80px;top:24.33px;font-size:21.5px;color:#333;font-weight:normal;font-family:'Liberation Sans';">Alphabet City</div>
<div class="t" style="left:481px;width:300px;text-align:right;top:24.33px;font-size:21.5px;color:#333;letter-spacing:0.6px">$1,030.91</div>
<div style="position:absolute;left:48px;top:67.2px;width:1100px;height:1.2999999999999972px;background:#ececec;"></div>
<div class="t" style="left:80px;top:93.14px;font-size:21.5px;color:#333;font-weight:normal;font-family:'Liberation Sans';">Astoria</div>
<div class="t" style="left:481px;width:300px;text-align:right;top:93.14px;font-size:21.5px;color:#333;letter-spacing:0.6px">$612.70</div>
<div style="position:absolute;left:48px;top:136.0px;width:1100px;height:1.3000000000000114px;background:#ececec;"></div>
<div class="t" style="left:80px;top:161.95px;font-size:21.5px;color:#333;font-weight:normal;font-family:'Liberation Sans';">Battery Park City</div>
<div class="t" style="left:481px;width:300px;text-align:right;top:161.95px;font-size:21.5px;color:#333;letter-spacing:0.6px">$1,370.75</div>
<div style="position:absolute;left:48px;top:204.8px;width:1100px;height:1.3000000000000114px;background:#ececec;"></div>
<div class="t" style="left:80px;top:230.75px;font-size:21.5px;color:#333;font-weight:normal;font-family:'Liberation Sans';">Bay Ridge</div>
<div class="t" style="left:481px;width:300px;text-align:right;top:230.75px;font-size:21.5px;color:#333;letter-spacing:0.6px">$619.71</div>
<div style="position:absolute;left:48px;top:273.6px;width:1100px;height:1.3000000000000114px;background:#ececec;"></div>
<div class="t" style="left:80px;top:299.57px;font-size:21.5px;color:#333;font-weight:normal;font-family:'Liberation Sans';">Baychester</div>
<div class="t" style="left:481px;width:300px;text-align:right;top:299.57px;font-size:21.5px;color:#333;letter-spacing:0.6px">$442.50</div>
<div style="position:absolute;left:48px;top:342.4px;width:1100px;height:1.3000000000000114px;background:#ececec;"></div>
<div class="t" style="left:80px;top:368.38px;font-size:21.5px;color:#333;font-weight:normal;font-family:'Liberation Sans';">Bayside</div>
<div class="t" style="left:481px;width:300px;text-align:right;top:368.38px;font-size:21.5px;color:#333;letter-spacing:0.6px">$900.00</div>
<div style="position:absolute;left:48px;top:411.2px;width:1100px;height:1.3000000000000114px;background:#ececec;"></div>
<div class="t" style="left:80px;top:437.19px;font-size:21.5px;color:#333;font-weight:normal;font-family:'Liberation Sans';">Bedford Park</div>
<div class="t" style="left:481px;width:300px;text-align:right;top:437.19px;font-size:21.5px;color:#333;letter-spacing:0.6px">$332.50</div>
<div style="position:absolute;left:48px;top:480.1px;width:1100px;height:1.3000000000000114px;background:#ececec;"></div>
<div class="t" style="left:80px;top:506.00px;font-size:21.5px;color:#333;font-weight:normal;font-family:'Liberation Sans';">Bedford-Stuyvesant</div>
<div class="t" style="left:241px;width:300px;text-align:right;top:506.00px;font-size:21.5px;color:#333;letter-spacing:0.6px">$441.67</div>
<div class="t" style="left:481px;width:300px;text-align:right;top:506.00px;font-size:21.5px;color:#333;letter-spacing:0.6px">$629.86</div>
<div class="t" style="left:721px;width:300px;text-align:right;top:506.00px;font-size:21.5px;color:#333;letter-spacing:0.6px">$589.67</div>
<div style="position:absolute;left:48px;top:548.9px;width:1100px;height:1.2999999999999545px;background:#ececec;"></div>
<div class="t" style="left:80px;top:574.81px;font-size:21.5px;color:#333;font-weight:normal;font-family:'Liberation Sans';">Bensonhurst</div>
<div class="t" style="left:481px;width:300px;text-align:right;top:574.81px;font-size:21.5px;color:#333;letter-spacing:0.6px">$494.29</div>
<div style="position:absolute;left:48px;top:617.7px;width:1100px;height:1.2999999999999545px;background:#ececec;"></div>
<div class="t" style="left:80px;top:643.62px;font-size:21.5px;color:#333;font-weight:normal;font-family:'Liberation Sans';">Boerum Hill</div>
<div class="t" style="left:481px;width:300px;text-align:right;top:643.62px;font-size:21.5px;color:#333;letter-spacing:0.6px">$1,019.71</div>
<div style="position:absolute;left:48px;top:686.5px;width:1100px;height:1.2999999999999545px;background:#ececec;"></div>
<div class="t" style="left:80px;top:712.43px;font-size:21.5px;color:#333;font-weight:normal;font-family:'Liberation Sans';">Borough Park</div>
<div class="t" style="left:481px;width:300px;text-align:right;top:712.43px;font-size:21.5px;color:#333;letter-spacing:0.6px">$950.00</div>
<div style="position:absolute;left:48px;top:755.3px;width:1100px;height:1.2999999999999545px;background:#ececec;"></div>
<div class="t" style="left:80px;top:781.24px;font-size:21.5px;color:#333;font-weight:normal;font-family:'Liberation Sans';">Brighton Beach</div>
<div class="t" style="left:481px;width:300px;text-align:right;top:781.24px;font-size:21.5px;color:#333;letter-spacing:0.6px">$649.33</div>
<div style="position:absolute;left:48px;top:824.1px;width:1100px;height:1.2999999999999545px;background:#ececec;"></div>
<div class="t" style="left:80px;top:850.05px;font-size:21.5px;color:#333;font-weight:normal;font-family:'Liberation Sans';">Bronxdale</div>
<div class="t" style="left:481px;width:300px;text-align:right;top:850.05px;font-size:21.5px;color:#333;letter-spacing:0.6px">$179.00</div>
<div style="position:absolute;left:48px;top:892.9px;width:1100px;height:1.2999999999999545px;background:#ececec;"></div>
<div class="t" style="left:80px;top:918.86px;font-size:21.5px;color:#333;font-weight:normal;font-family:'Liberation Sans';">Brooklyn</div>
<div class="t" style="left:481px;width:300px;text-align:right;top:918.86px;font-size:21.5px;color:#333;letter-spacing:0.6px">$730.00</div>
<div style="position:absolute;left:48px;top:961.7px;width:1100px;height:1.2999999999999545px;background:#ececec;"></div>
<div class="t" style="left:80px;top:987.67px;font-size:21.5px;color:#333;font-weight:normal;font-family:'Liberation Sans';">Brooklyn Heights</div>
<div class="t" style="left:481px;width:300px;text-align:right;top:987.67px;font-size:21.5px;color:#333;letter-spacing:0.6px">$1,261.58</div>
<div style="position:absolute;left:48px;top:1030.5px;width:1100px;height:1.2999999999999545px;background:#ececec;"></div>
<div class="t" style="left:80px;top:1056.47px;font-size:21.5px;color:#333;font-weight:normal;font-family:'Liberation Sans';">Brooklyn Navy Yard</div>
<div class="t" style="left:481px;width:300px;text-align:right;top:1056.47px;font-size:21.5px;color:#333;letter-spacing:0.6px">$752.50</div>
<div style="position:absolute;left:48px;top:1099.4px;width:1100px;height:1.2999999999999545px;background:#ececec;"></div>
<div class="t" style="left:80px;top:1125.28px;font-size:21.5px;color:#333;font-weight:normal;font-family:'Liberation Sans';">Brownsville</div>
<div class="t" style="left:481px;width:300px;text-align:right;top:1125.28px;font-size:21.5px;color:#333;letter-spacing:0.6px">$359.00</div>
<div style="position:absolute;left:48px;top:1168.2px;width:1100px;height:1.2999999999999545px;background:#ececec;"></div>
<div class="t" style="left:80px;top:1194.09px;font-size:21.5px;color:#333;font-weight:normal;font-family:'Liberation Sans';">Bushwick</div>
<div class="t" style="left:481px;width:300px;text-align:right;top:1194.09px;font-size:21.5px;color:#333;letter-spacing:0.6px">$511.90</div>
</div>
<div style="position:absolute;left:1110.5px;top:359px;width:3.0px;height:1211px;background:#e6e6e6;border-radius:0 0 2px 2px;"></div>
<div style="position:absolute;left:1860px;top:1538px;width:96px;height:96px;border-radius:50%;background:#0b70b8;box-shadow:0 2px 10px rgba(0,0,0,0.15)"></div>
<svg style="position:absolute;left:1886px;top:1560px" width="44" height="53" viewBox="0 0 44 53"><path d="M4.5 0H39.5A4.5 4.5 0 0 1 44 4.5V52.2L29.6 46.3H4.5A4.5 4.5 0 0 1 0 41.8V4.5A4.5 4.5 0 0 1 4.5 0Z" fill="#fff"/><path d="M7.5 33.5Q22 43.5 36.5 33.5" fill="none" stroke="#0c6db4" stroke-width="2.8" stroke-linecap="round"/></svg>
</body></html>
